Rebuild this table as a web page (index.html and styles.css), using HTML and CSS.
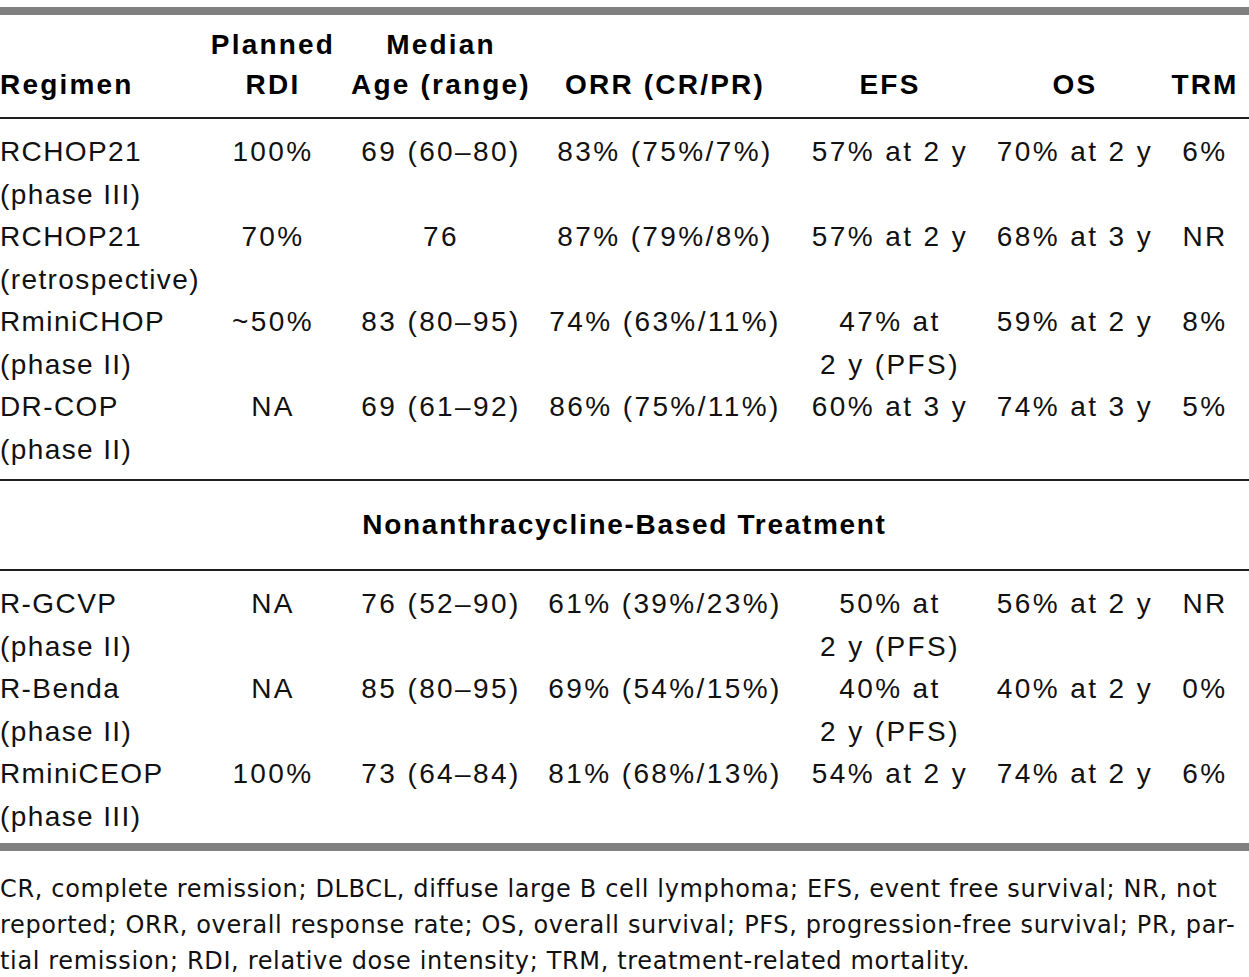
FILE: index.html
```html
<!DOCTYPE html>
<html lang="en">
<head>
<meta charset="utf-8">
<title>Treatment regimens</title>
<link rel="stylesheet" href="styles.css">
</head>
<body>
<div class="page">
  <table class="regimens">
    <colgroup>
      <col class="w-reg">
      <col class="w-rdi">
      <col class="w-age">
      <col class="w-orr">
      <col class="w-efs">
      <col class="w-os">
      <col class="w-trm">
    </colgroup>
    <thead>
      <tr>
        <th class="left">Regimen</th>
        <th>Planned<br>RDI</th>
        <th>Median<br>Age (range)</th>
        <th>ORR (CR/PR)</th>
        <th>EFS</th>
        <th>OS</th>
        <th>TRM</th>
      </tr>
    </thead>
    <tbody class="group">
      <tr>
        <td class="left">RCHOP21<br>(phase III)</td>
        <td>100%</td>
        <td>69 (60–80)</td>
        <td>83% (75%/7%)</td>
        <td>57% at 2 y</td>
        <td>70% at 2 y</td>
        <td>6%</td>
      </tr>
      <tr>
        <td class="left">RCHOP21<br>(retrospective)</td>
        <td>70%</td>
        <td>76</td>
        <td>87% (79%/8%)</td>
        <td>57% at 2 y</td>
        <td>68% at 3 y</td>
        <td>NR</td>
      </tr>
      <tr>
        <td class="left">RminiCHOP<br>(phase II)</td>
        <td>~50%</td>
        <td>83 (80–95)</td>
        <td>74% (63%/11%)</td>
        <td>47% at<br>2 y (PFS)</td>
        <td>59% at 2 y</td>
        <td>8%</td>
      </tr>
      <tr>
        <td class="left">DR-COP<br>(phase II)</td>
        <td>NA</td>
        <td>69 (61–92)</td>
        <td>86% (75%/11%)</td>
        <td>60% at 3 y</td>
        <td>74% at 3 y</td>
        <td>5%</td>
      </tr>
    </tbody>
    <tbody class="section">
      <tr>
        <td colspan="7">Nonanthracycline-Based Treatment</td>
      </tr>
    </tbody>
    <tbody class="group last">
      <tr>
        <td class="left">R-GCVP<br>(phase II)</td>
        <td>NA</td>
        <td>76 (52–90)</td>
        <td>61% (39%/23%)</td>
        <td>50% at<br>2 y (PFS)</td>
        <td>56% at 2 y</td>
        <td>NR</td>
      </tr>
      <tr>
        <td class="left">R-Benda<br>(phase II)</td>
        <td>NA</td>
        <td>85 (80–95)</td>
        <td>69% (54%/15%)</td>
        <td>40% at<br>2 y (PFS)</td>
        <td>40% at 2 y</td>
        <td>0%</td>
      </tr>
      <tr>
        <td class="left">RminiCEOP<br>(phase III)</td>
        <td>100%</td>
        <td>73 (64–84)</td>
        <td>81% (68%/13%)</td>
        <td>54% at 2 y</td>
        <td>74% at 2 y</td>
        <td>6%</td>
      </tr>
    </tbody>
  </table>
  <p class="footnote">CR, complete remission; DLBCL, diffuse large B cell lymphoma; EFS, event free survival; NR, not<br>reported; ORR, overall response rate; OS, overall survival; PFS, progression-free survival; PR, par-<br>tial remission; RDI, relative dose intensity; TRM, treatment-related mortality.</p>
</div>
</body>
</html>
```
FILE: styles.css
```css
html, body {
  margin: 0;
  padding: 0;
  background: #ffffff;
}

.page {
  width: 1249px;
  padding-top: 7px;
  color: #111111;
  font-family: "Liberation Sans", Arial, sans-serif;
}

.regimens {
  width: 1249px;
  table-layout: fixed;
  border-collapse: separate;
  border-spacing: 0;
  border-top: 8px solid #808080;
  border-bottom: 8px solid #808080;
}

.w-reg { width: 203px; }
.w-rdi { width: 140px; }
.w-age { width: 196px; }
.w-orr { width: 252px; }
.w-efs { width: 198px; }
.w-os  { width: 172px; }
.w-trm { width: 88px; }

.regimens th,
.regimens td {
  padding: 0;
  text-align: center;
  white-space: nowrap;
  font-size: 28px;
}

.regimens .left {
  text-align: left;
}

.regimens th {
  font-weight: bold;
  color: #000000;
  letter-spacing: 2.2px;
  line-height: 40px;
  vertical-align: bottom;
  padding-top: 10px;
  padding-bottom: 12px;
  border-bottom: 2px solid #1e1e1e;
}

.regimens td {
  font-weight: normal;
  letter-spacing: 2.4px;
  line-height: 42.5px;
  vertical-align: top;
}

.regimens td.left {
  letter-spacing: 1.4px;
}

.group tr:first-child td {
  padding-top: 12px;
}

.group tr:last-child td {
  padding-bottom: 8px;
  border-bottom: 2px solid #1e1e1e;
}

.group.last tr:last-child td {
  padding-bottom: 5px;
  border-bottom: none;
}

.regimens .section td {
  font-weight: bold;
  color: #000000;
  letter-spacing: 1.7px;
  line-height: 42px;
  padding: 23px 0;
  border-bottom: 2px solid #1e1e1e;
}

.footnote {
  margin: 0;
  padding-top: 20px;
  font-family: "DejaVu Sans", "Liberation Sans", sans-serif;
  font-size: 24px;
  line-height: 36px;
  letter-spacing: 0.65px;
  color: #111111;
  white-space: nowrap;
}
```
